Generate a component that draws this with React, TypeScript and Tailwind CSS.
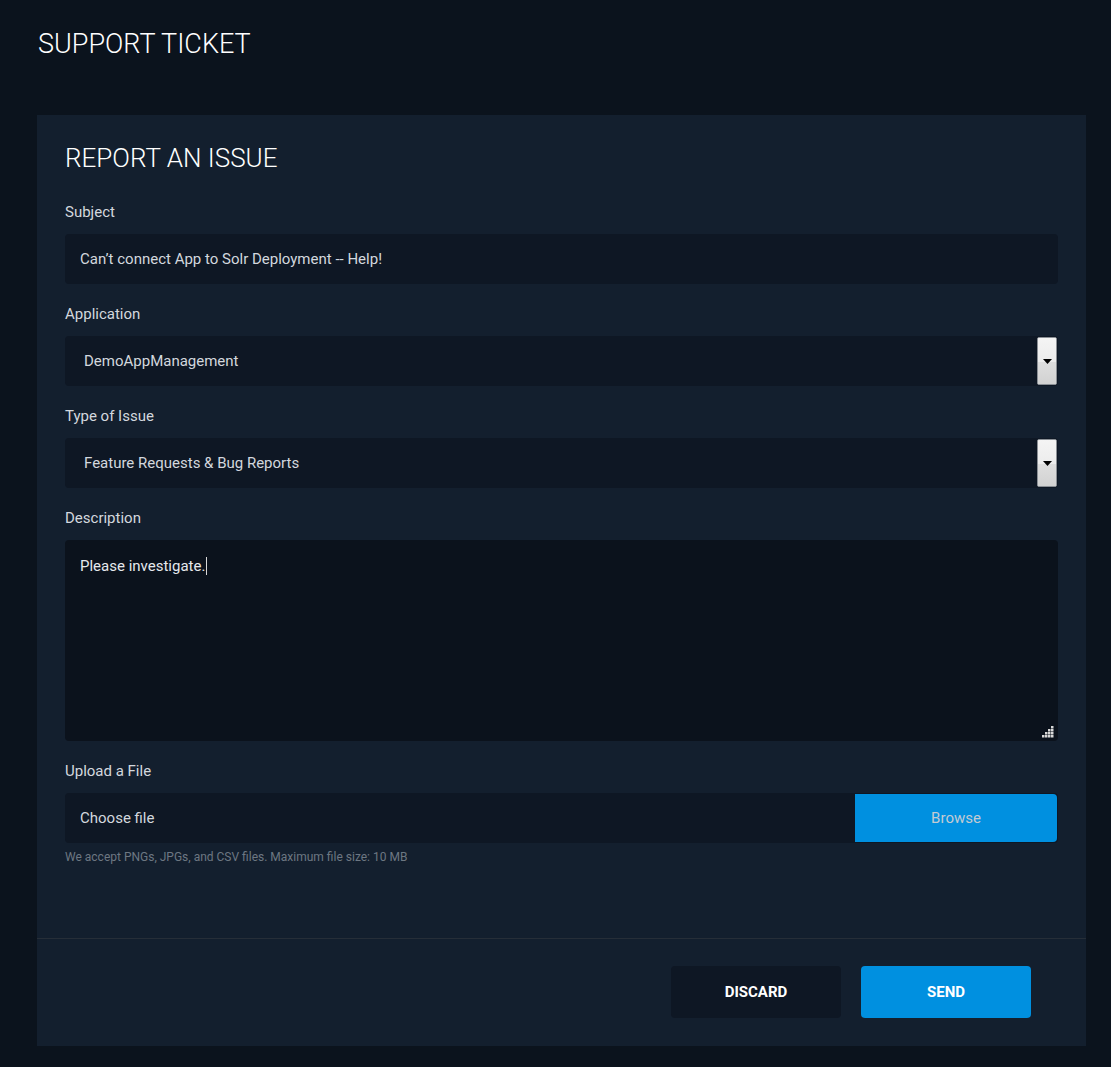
import React from "react";

function Label({ children }: { children: React.ReactNode }) {
  return <div className="mb-3 h-5 text-[15px] leading-5 text-[#d3d8de]">{children}</div>;
}

function SelectArrow() {
  return (
    <div className="flex h-[48px] w-[20px] flex-col overflow-hidden rounded-[2px] border border-[#8a8f95] bg-[#dcdcdc]">
      <div className="h-[24px] bg-gradient-to-b from-[#f4f4f4] to-[#ececec]" />
      <div className="flex-1 bg-gradient-to-b from-[#dedede] to-[#d2d2d2]" />
    </div>
  );
}

function Select({ value }: { value: string }) {
  return (
    <div className="mb-5 flex h-[50px] items-center justify-between rounded bg-[#0e1724] pl-[19px] pr-[1px]">
      <span className="text-[15px] text-[#d3d8de]">{value}</span>
      <div className="relative">
        <SelectArrow />
        <svg className="absolute left-[6px] top-[22px]" width="9" height="5" viewBox="0 0 9 5">
          <path d="M0 0h9L4.5 5z" fill="#000" />
        </svg>
      </div>
    </div>
  );
}

function ResizeGrip() {
  const dots = [
    [9, 0],
    [6, 3],
    [9, 3],
    [3, 6],
    [6, 6],
    [9, 6],
    [0, 9],
    [3, 9],
    [6, 9],
    [9, 9],
  ];
  return (
    <svg className="absolute bottom-[3px] right-[4px]" width="12" height="12" viewBox="0 0 12 12">
      {dots.map(([x, y]) => (
        <rect key={`${x}-${y}`} x={x} y={y} width="2.5" height="2.5" fill="#d8d8d8" />
      ))}
    </svg>
  );
}

export default function App() {
  return (
    <div className="min-h-[1067px] bg-[#0b131d] px-[37px] pb-[22px] pt-[28px] font-['Roboto',sans-serif]">
      <h1 className="pl-px text-[27px] font-light leading-8 text-white">SUPPORT TICKET</h1>

      <div className="mt-[55px] w-[1049px] bg-[#131f2e]">
        <div className="px-[28px] pb-[73px] pt-[27px]">
          <h2 className="mb-[28px] text-[26px] font-light leading-8 text-white">REPORT AN ISSUE</h2>

          <Label>Subject</Label>
          <div className="mb-5 flex h-[50px] items-center rounded bg-[#0e1724] px-[15px] text-[15px] text-[#d3d8de]">
            Can’t connect App to Solr Deployment -- Help!
          </div>

          <Label>Application</Label>
          <Select value="DemoAppManagement" />

          <Label>Type of Issue</Label>
          <Select value="Feature Requests &amp; Bug Reports" />

          <Label>Description</Label>
          <div className="relative mb-5 h-[201px] rounded bg-[#0b121c] px-[15px] pt-[13px] text-[15px] leading-5 text-[#e6e9ed]">
            <span>Please investigate.</span>
            <span className="ml-[1px] inline-block h-[18px] w-px translate-y-[4px] bg-[#d8d8d8]" />
            <ResizeGrip />
          </div>

          <Label>Upload a File</Label>
          <div className="flex h-[50px] items-stretch overflow-hidden rounded bg-[#0e1724]">
            <div className="flex flex-1 items-center px-[15px] text-[15px] text-[#d3d8de]">Choose file</div>
            <div className="my-[1px] mr-[1px] flex w-[202px] items-center justify-center rounded-r bg-[#0090e0] text-[15px] text-[#c3cbd3]">
              Browse
            </div>
          </div>
          <p className="mt-[6px] text-[12px] leading-4 text-[#6d7782]">
            We accept PNGs, JPGs, and CSV files. Maximum file size: 10 MB
          </p>
        </div>

        <div className="flex justify-end gap-5 border-t border-[#262e38] pb-[28px] pl-[28px] pr-[55px] pt-[27px]">
          <button className="h-[52px] w-[170px] rounded bg-[#0e1724] text-[15px] font-bold text-white">DISCARD</button>
          <button className="h-[52px] w-[170px] rounded bg-[#0090e0] text-[15px] font-bold text-white">SEND</button>
        </div>
      </div>
    </div>
  );
}
